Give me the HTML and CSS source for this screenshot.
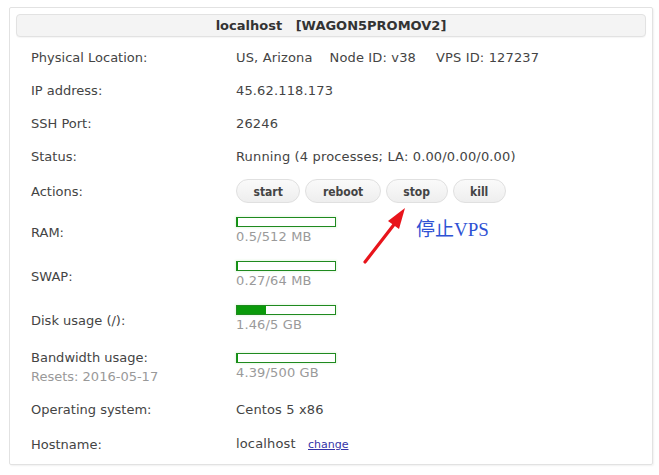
FILE: index.html
```html
<!DOCTYPE html>
<html>
<head>
<meta charset="utf-8">
<link rel="stylesheet" href="styles.css">
</head>
<body>
<div class="page">
  <div class="box">
    <div class="title">localhost   [WAGON5PROMOV2]</div>
    <div class="rows">
      <div class="row"><div class="lbl">Physical Location:</div><div class="val"><span>US, Arizona</span><span class="sp1">Node ID: v38</span><span class="sp2">VPS ID: 127237</span></div></div>
      <div class="row"><div class="lbl">IP address:</div><div class="val">45.62.118.173</div></div>
      <div class="row"><div class="lbl">SSH Port:</div><div class="val">26246</div></div>
      <div class="row"><div class="lbl">Status:</div><div class="val">Running (4 processes; LA: 0.00/0.00/0.00)</div></div>
      <div class="row row-actions"><div class="lbl">Actions:</div>
        <div class="val btns">
          <button class="btn">start</button>
          <button class="btn">reboot</button>
          <button class="btn">stop</button>
          <button class="btn">kill</button>
        </div>
      </div>
      <div class="row"><div class="lbl lbl-low">RAM:</div>
        <div class="val meter"><div class="bar"><div class="fill" style="width:1px"></div></div><div class="mtext">0.5/512 MB</div></div></div>
      <div class="row"><div class="lbl lbl-low">SWAP:</div>
        <div class="val meter"><div class="bar"><div class="fill" style="width:1px"></div></div><div class="mtext">0.27/64 MB</div></div></div>
      <div class="row"><div class="lbl lbl-low">Disk usage (/):</div>
        <div class="val meter"><div class="bar"><div class="fill" style="width:29px"></div></div><div class="mtext">1.46/5 GB</div></div></div>
      <div class="row"><div class="lbl"><div>Bandwidth usage:</div><div class="resets">Resets: 2016-05-17</div></div>
        <div class="val meter"><div class="bar"><div class="fill" style="width:1px"></div></div><div class="mtext">4.39/500 GB</div></div></div>
      <div class="row"><div class="lbl">Operating system:</div><div class="val">Centos 5 x86</div></div>
      <div class="row row-host"><div class="lbl">Hostname:</div><div class="val">localhost <a class="change" href="#">change</a></div></div>
    </div>
  </div>
  <svg class="arrow" width="60" height="70" viewBox="0 0 60 70">
    <line x1="6" y1="62" x2="37" y2="22" stroke="#e8141b" stroke-width="3.2" stroke-linecap="round"/>
    <polygon points="46,8 29,21 40,29" fill="#e8141b"/>
  </svg>
  <div class="note">停止VPS</div>
</div>
</body>
</html>
```
FILE: styles.css
```css
html, body {
  margin: 0;
  padding: 0;
  background: #fff;
}
body {
  font-family: "DejaVu Sans", Verdana, sans-serif;
  font-size: 13px;
  color: #444;
}
.page {
  position: relative;
  width: 659px;
  height: 475px;
  padding: 7px 0 0 9px;
  box-sizing: border-box;
}
.box {
  width: 644px;
  height: 458px;
  box-sizing: border-box;
  border: 1px solid #e2e2e2;
  border-radius: 2px;
  box-shadow: 1px 1px 2px rgba(0,0,0,0.06);
  padding: 6px 6px 0 6px;
}
.title {
  height: 23px;
  box-sizing: border-box;
  border: 1px solid #e2e2e2;
  border-radius: 4px;
  background: #f4f4f4;
  box-shadow: 0 1px 1px rgba(0,0,0,0.04);
  text-align: center;
  font-weight: bold;
  font-size: 13px;
  line-height: 21px;
  color: #333;
  white-space: pre;
}
.rows {
  margin-top: 4px;
}
.row {
  display: flex;
  align-items: center;
  padding: 8px 0;
  line-height: 17px;
}
.lbl {
  width: 205px;
  padding-left: 15px;
  flex: none;
}
.lbl-low {
  padding-top: 3px;
}
.resets {
  color: #999;
  margin-top: 2px;
}
.val {
  flex: 1;
  letter-spacing: 0.15px;
}
.sp1 { margin-left: 17px; }
.sp2 { margin-left: 20px; }
.row-actions {
  padding: 6px 0;
}
.btns {
  display: flex;
  gap: 5px;
  letter-spacing: 0;
}
.btn {
  height: 24px;
  box-sizing: border-box;
  border: 1px solid #e0e0e0;
  border-radius: 12px;
  background: linear-gradient(#fafafa, #eeeeee);
  font-family: "DejaVu Sans Condensed", "DejaVu Sans", sans-serif;
  font-stretch: condensed;
  font-weight: bold;
  font-size: 12px;
  color: #444;
  padding: 1px 16.5px 0;
  line-height: 22px;
  margin: 0;
}
.meter {
  display: flex;
  flex-direction: column;
}
.bar {
  width: 100px;
  height: 10px;
  box-sizing: border-box;
  border: 1px solid #1f8a1f;
  background: #fff;
  box-shadow: 0 0 2px 1px #eaf8e6;
}
.fill {
  height: 100%;
  background: #0a9a0a;
}
.mtext {
  margin-top: 2px;
  line-height: 16px;
  color: #9a9a9a;
}
.row-host {
  padding: 9px 0 10px;
}
.change {
  font-size: 11px;
  color: #3434a8;
  margin-left: 8px;
  letter-spacing: 0;
}
.arrow {
  position: absolute;
  left: 359px;
  top: 200px;
}
.note {
  position: absolute;
  left: 416px;
  top: 218px;
  font-family: "Liberation Serif", "Noto Sans CJK SC", serif;
  font-size: 19px;
  line-height: 24px;
  color: #2f52d4;
  letter-spacing: 0;
}
```
